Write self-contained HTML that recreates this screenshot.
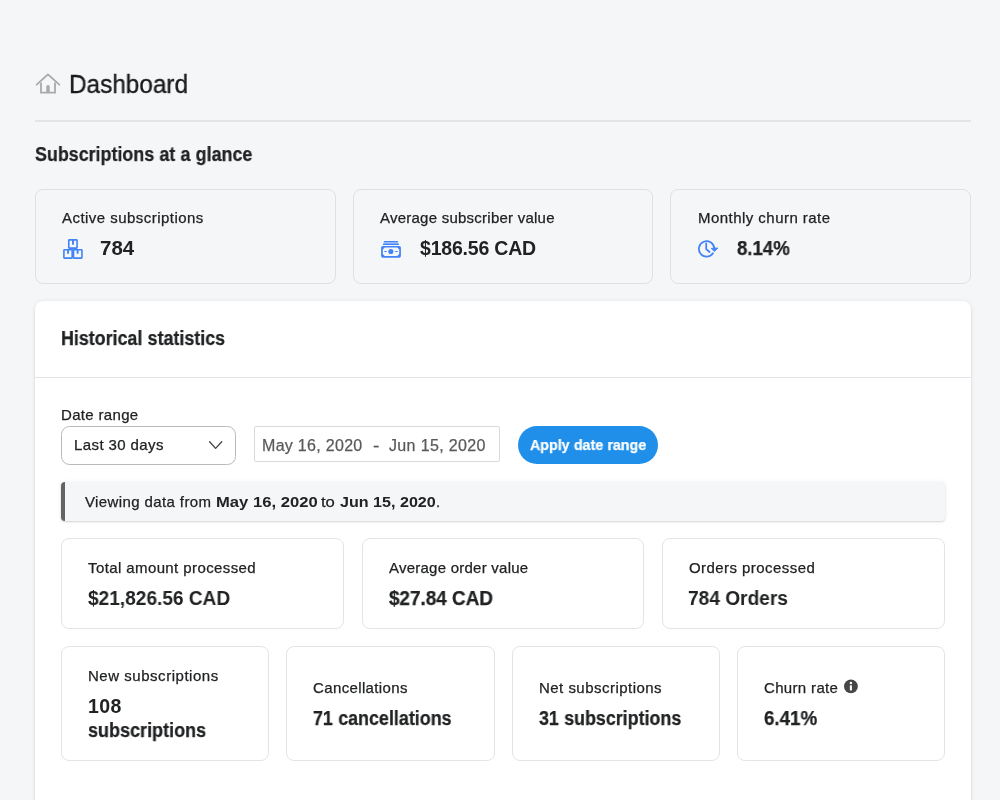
<!DOCTYPE html>
<html><head><meta charset="utf-8">
<style>
*{box-sizing:border-box;margin:0;padding:0}
html,body{width:1000px;height:800px;overflow:hidden;background:#f5f6f8;font-family:"Liberation Sans",sans-serif;color:#202223}
.abs{position:absolute}
.t{position:absolute;line-height:30px;white-space:nowrap;color:#202223;will-change:transform;transform-origin:0 0}
.card{position:absolute;border:1px solid #dfe0e3;border-radius:8px;background:#f5f6f8}
.card.w{background:#fff;border-color:#e3e4e7}
</style></head><body>
<div class="abs" style="left:35px;top:120px;width:936px;height:2px;background:#e3e4e6"></div>


<div class="abs" style="left:35px;top:301px;width:936px;height:520px;background:#fff;border-radius:8px;box-shadow:0 0 5px rgba(23,24,24,.06),0 1px 2px rgba(0,0,0,.15)"></div>
<div class="abs" style="left:35px;top:377px;width:936px;height:1px;background:#e4e4e6"></div>
<div class="abs" style="left:61.1px;top:425.5px;width:175.1px;height:39.3px;border:1.4px solid #bababc;border-radius:8.5px;background:#fff"></div>
<div class="abs" style="left:254px;top:426px;width:246px;height:36px;border:1px solid #d9dadc;border-radius:2px;background:#fff"></div>
<div class="abs" style="left:517.7px;top:425.7px;width:140.3px;height:38.7px;border-radius:20px;background:#208fea"></div>
<div class="abs" style="left:61px;top:481.5px;width:884px;height:39px;background:#f5f6f8;border-left:4px solid #636363;border-radius:4px;box-shadow:0 0 5px rgba(23,24,24,.05),0 1px 2px rgba(0,0,0,.15)"></div>

<div class="card" style="left:34.9px;top:188.5px;width:301px;height:95.25px"></div>
<div class="card" style="left:353px;top:188.5px;width:300px;height:95.25px"></div>
<div class="card" style="left:670.25px;top:188.5px;width:300.75px;height:95.25px"></div>
<div class="card w" style="left:61.1px;top:538px;width:283.4px;height:90.9px"></div>
<div class="card w" style="left:362px;top:538px;width:282px;height:90.9px"></div>
<div class="card w" style="left:661.75px;top:538px;width:283.15px;height:90.9px"></div>
<div class="card w" style="left:61.1px;top:646.25px;width:207.5px;height:114.65px"></div>
<div class="card w" style="left:286px;top:646.25px;width:208.75px;height:114.65px"></div>
<div class="card w" style="left:512px;top:646.25px;width:207.75px;height:114.65px"></div>
<div class="card w" style="left:737.25px;top:646.25px;width:207.65px;height:114.65px"></div>
<svg class="abs" style="left:0;top:0" width="1000" height="800" viewBox="0 0 1000 800">
<g fill="none" stroke="#a9a9a9" stroke-width="1.8" stroke-linejoin="round" stroke-linecap="round">
<path d="M36.7 84.6 L47.9 74.4 L59.3 84.6"/><path d="M41 82.6 V92.7 H55 V82.6" stroke-linejoin="miter" stroke-linecap="butt"/>
<path d="M46.3 92.7 V86.6 a1.7 1.7 0 0 1 3.4 0 V92.7 Z" fill="#a9a9a9" stroke="none"/>
</g>
<path d="M209.6 441.7 L215.6 448.4 L221.7 441.7" fill="none" stroke="#444" stroke-width="1.3" stroke-linecap="round" stroke-linejoin="round"/>
<g><circle cx="850.9" cy="686.4" r="6.9" fill="#464646"/><rect x="849.85" y="685.3" width="2.1" height="5.2" rx="0.4" fill="#fff"/><circle cx="850.9" cy="683" r="1.2" fill="#fff"/></g>
<g fill="none" stroke="#4283f7" stroke-width="1.6" stroke-linejoin="miter">
<rect x="68.76" y="239.89" width="8.3" height="8.2" rx="0.5"/>
<rect x="63.89" y="249.75" width="8.3" height="8.35" rx="0.5"/>
<rect x="73.5" y="249.75" width="8.45" height="8.35" rx="0.5"/>
<path d="M73 239.9 V244.8 M68.06 249.8 V253.7 M77.6 249.8 V253.7" stroke-width="1.9"/>
<path d="M72.85 248.6 V251" stroke-width="1"/>
</g>
<g fill="#4283f7">
<rect x="383.85" y="240.9" width="14.15" height="1.35" rx="0.6"/>
<rect x="383.5" y="242.25" width="14.9" height="1.4" opacity="0.45"/>
<rect x="382.9" y="243.6" width="16.1" height="1.3" rx="0.6"/>
<path fill-rule="evenodd" d="M382.8 245.9 H399.2 A1.7 1.7 0 0 1 400.9 247.6 V256.1 A1.7 1.7 0 0 1 399.2 257.8 H382.8 A1.7 1.7 0 0 1 381.1 256.1 V247.6 A1.7 1.7 0 0 1 382.8 245.9 Z M384.7 247.5 L382.8 249.4 V254 L384.7 255.9 H397.3 L399.2 254 V249.4 L397.3 247.5 Z"/>
<circle cx="390.85" cy="251.5" r="2.55"/>
<rect x="384.2" y="251" width="2.6" height="1.1" rx="0.5"/>
<rect x="395.1" y="251" width="2.7" height="1.1" rx="0.5"/>
</g>
<g fill="none" stroke="#4283f7" stroke-width="1.75" stroke-linecap="round" stroke-linejoin="round">
<path d="M714.27 248.2 A7.7 7.7 0 1 0 712.98 253.2"/>
<path d="M706.2 243.4 V249 L709.5 252"/>
<path d="M711.6 248.4 L717.6 248 L714.7 251.2 Z" fill="#4283f7" stroke-width="1"/>
</g>
</svg>

<div class="t" style="left:69.2px;top:69px;font-size:25px;-webkit-text-stroke:0.35px;color:#1a1a1a;transform:scaleX(0.9731);">Dashboard</div>
<div class="t" style="left:34.8px;top:139px;font-size:19.5px;font-weight:bold;-webkit-text-stroke:0.25px;word-spacing:0.3px;transform:scaleX(0.9165);">Subscriptions at a glance</div>
<div class="t" style="left:61.7px;top:203px;font-size:15px;-webkit-text-stroke:0.25px;letter-spacing:0.46px;">Active subscriptions</div>
<div class="t" style="left:100.4px;top:233px;font-size:19.5px;font-weight:bold;transform:scaleX(1.05);">784</div>
<div class="t" style="left:380.4px;top:203px;font-size:15px;-webkit-text-stroke:0.25px;letter-spacing:0.24px;">Average subscriber value</div>
<div class="t" style="left:420px;top:233px;font-size:19.5px;font-weight:bold;letter-spacing:-0.2px;">$186.56 CAD</div>
<div class="t" style="left:697.6px;top:203px;font-size:15px;-webkit-text-stroke:0.25px;letter-spacing:0.46px;">Monthly churn rate</div>
<div class="t" style="left:736.9px;top:233px;font-size:19.5px;font-weight:bold;-webkit-text-stroke:0.25px;transform:scaleX(0.9545);">8.14%</div>
<div class="t" style="left:61px;top:323px;font-size:19.5px;font-weight:bold;-webkit-text-stroke:0.25px;word-spacing:0.3px;transform:scaleX(0.9157);">Historical statistics</div>
<div class="t" style="left:60.6px;top:400px;font-size:15px;-webkit-text-stroke:0.25px;letter-spacing:0.33px;">Date range</div>
<div class="t" style="left:73.8px;top:430px;font-size:15px;-webkit-text-stroke:0.25px;letter-spacing:0.4px;">Last 30 days</div>
<div class="t" style="left:261.7px;top:431px;font-size:16px;-webkit-text-stroke:0.25px;color:#5a5a5a;letter-spacing:0.3px;">May 16, 2020</div>
<div class="t" style="left:373.2px;top:431px;font-size:16px;-webkit-text-stroke:0.25px;color:#5a5a5a;transform:scaleX(1.2);">-</div>
<div class="t" style="left:388.8px;top:431px;font-size:16px;-webkit-text-stroke:0.25px;color:#5a5a5a;letter-spacing:0.35px;">Jun 15, 2020</div>
<div class="t" style="left:530.1px;top:430px;font-size:15px;font-weight:bold;color:#fff;-webkit-text-stroke:0.25px;word-spacing:0.3px;transform:scaleX(0.95);">Apply date range</div>
<div class="t" style="left:84.8px;top:487px;font-size:15px;-webkit-text-stroke:0.25px;letter-spacing:0.39px;">Viewing data from</div>
<div class="t" style="left:215.5px;top:487px;font-size:15px;font-weight:bold;transform:scaleX(1.1078);">May 16, 2020</div>
<div class="t" style="left:321.2px;top:487px;font-size:15px;-webkit-text-stroke:0.25px;transform:scaleX(1.1083);">to</div>
<div class="t" style="left:339.5px;top:487px;font-size:15px;font-weight:bold;transform:scaleX(1.073);">Jun 15, 2020</div>
<div class="t" style="left:436.4px;top:487px;font-size:15px;-webkit-text-stroke:0.25px;letter-spacing:0.2px;">.</div>
<div class="t" style="left:87.7px;top:553px;font-size:15px;-webkit-text-stroke:0.25px;letter-spacing:0.4px;">Total amount processed</div>
<div class="t" style="left:88.2px;top:583px;font-size:19.5px;font-weight:bold;transform:scaleX(0.9786);">$21,826.56 CAD</div>
<div class="t" style="left:388.6px;top:553px;font-size:15px;-webkit-text-stroke:0.25px;letter-spacing:0.24px;">Average order value</div>
<div class="t" style="left:388.8px;top:583px;font-size:19.5px;font-weight:bold;-webkit-text-stroke:0.25px;transform:scaleX(0.9682);">$27.84 CAD</div>
<div class="t" style="left:688.5px;top:553px;font-size:15px;-webkit-text-stroke:0.25px;letter-spacing:0.44px;">Orders processed</div>
<div class="t" style="left:687.9px;top:583px;font-size:19.5px;font-weight:bold;transform:scaleX(0.981);">784 Orders</div>
<div class="t" style="left:87.6px;top:661px;font-size:15px;-webkit-text-stroke:0.25px;letter-spacing:0.53px;">New subscriptions</div>
<div class="t" style="left:87.6px;top:691px;font-size:19.5px;font-weight:bold;letter-spacing:0.4px;">108</div>
<div class="t" style="left:87.6px;top:715px;font-size:19.5px;font-weight:bold;-webkit-text-stroke:0.25px;transform:scaleX(0.9238);">subscriptions</div>
<div class="t" style="left:312.6px;top:673px;font-size:15px;-webkit-text-stroke:0.25px;letter-spacing:0.37px;">Cancellations</div>
<div class="t" style="left:312.6px;top:703px;font-size:19.5px;font-weight:bold;-webkit-text-stroke:0.25px;word-spacing:0.3px;transform:scaleX(0.9181);">71 cancellations</div>
<div class="t" style="left:538.5px;top:673px;font-size:15px;-webkit-text-stroke:0.25px;letter-spacing:0.47px;">Net subscriptions</div>
<div class="t" style="left:538.5px;top:703px;font-size:19.5px;font-weight:bold;-webkit-text-stroke:0.25px;word-spacing:0.3px;transform:scaleX(0.9161);">31 subscriptions</div>
<div class="t" style="left:764.4px;top:673px;font-size:15px;-webkit-text-stroke:0.25px;letter-spacing:0.34px;">Churn rate</div>
<div class="t" style="left:764.3px;top:703px;font-size:19.5px;font-weight:bold;-webkit-text-stroke:0.25px;transform:scaleX(0.9618);">6.41%</div>
</body></html>
